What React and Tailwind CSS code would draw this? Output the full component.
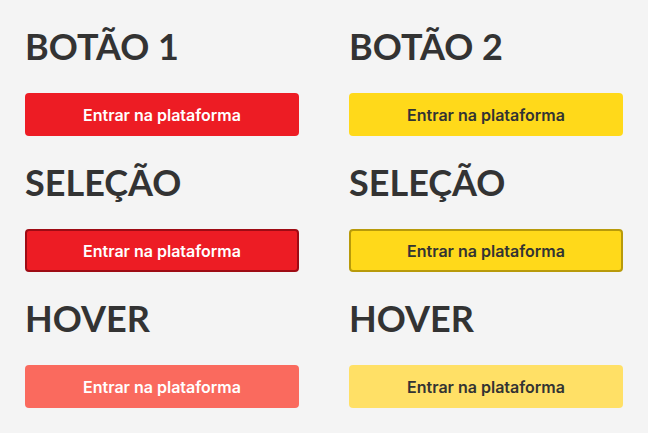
const sections = [
  {
    title: ["BOTÃO 1", "BOTÃO 2"],
    red: "bg-[#ed1c24] text-white",
    yellow: "bg-[#ffd91a] text-[#333333]",
  },
  {
    title: ["SELEÇÃO", "SELEÇÃO"],
    red: "bg-[#ed1c24] text-white border-2 border-[#9e0b14]",
    yellow: "bg-[#ffd91a] text-[#333333] border-2 border-[#b89a0a]",
  },
  {
    title: ["HOVER", "HOVER"],
    red: "bg-[#fa6a5e] text-white",
    yellow: "bg-[#ffe066] text-[#333333]",
  },
];

const Button = ({ className }) => (
  <button
    className={`w-[274px] h-[43px] rounded-[4px] flex items-center justify-center text-[16px] font-semibold font-[Inter,sans-serif] ${className}`}
  >
    Entrar na plataforma
  </button>
);

export default function App() {
  return (
    <div className="w-[648px] h-[433px] bg-[#f4f4f4] pl-[25px] pt-[25px] overflow-hidden">
      <div className="grid grid-cols-[274px_274px] gap-x-[50px] gap-y-[25px]">
        {sections.map((s, i) => (
          <>
            <div key={`l${i}`} className="flex flex-col gap-[25px]">
              <h2 className="h-[43px] text-[36px] leading-[43px] font-bold text-[#333333] font-[Lato,sans-serif]">
                {s.title[0]}
              </h2>
              <Button className={s.red} />
            </div>
            <div key={`r${i}`} className="flex flex-col gap-[25px]">
              <h2 className="h-[43px] text-[36px] leading-[43px] font-bold text-[#333333] font-[Lato,sans-serif]">
                {s.title[1]}
              </h2>
              <Button className={s.yellow} />
            </div>
          </>
        ))}
      </div>
    </div>
  );
}
